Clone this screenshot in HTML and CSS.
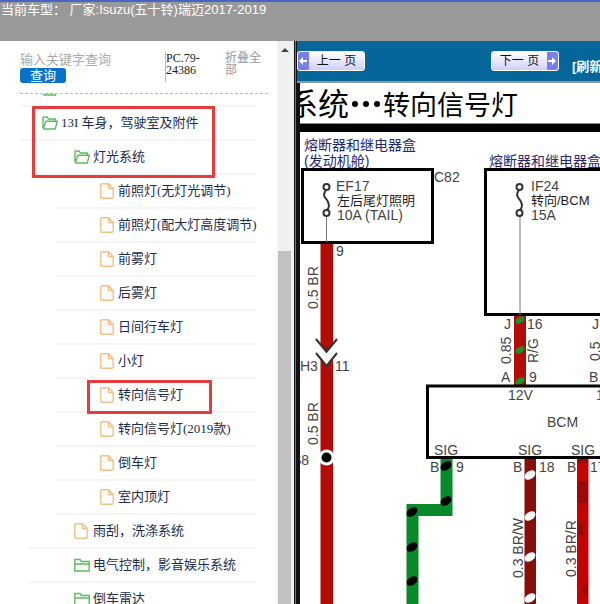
FILE: index.html
```html
<!DOCTYPE html>
<html lang="zh-CN">
<head>
<meta charset="utf-8">
<title>Isuzu(五十铃)瑞迈2017-2019</title>
<link rel="stylesheet" href="styles.css">
</head>
<body>
<svg class="defs" aria-hidden="true">
  <symbol id="open" viewBox="0 0 16 14"><path d="M1 12.5V1.7Q1 1 1.7 1H5l1.5 2h6.300q.7 0 .7.700V5M1.300 12.800 4 5.200h11.300L13.300 13H1.300"/></symbol>
  <symbol id="closed" viewBox="0 0 16 14"><path d="M.8 13V1.500H6L7.500 3.500H15.200V13zM.8 6H15.200"/></symbol>
  <symbol id="file" viewBox="0 0 14 16"><path d="M2 .8H8.500L13.200 5.500V14q0 1.200-1.200 1.200H2Q.8 15.200.8 14V2Q.8.800 2 .8M8.500 1V5.500H13"/></symbol>
</svg>
<header class="top">当前车型： 厂家:Isuzu(五十铃)瑞迈2017-2019</header>
<main class="main">
  <aside class="side">
    <div class="side-body">
      <form class="search">
        <div class="search-field">
          <input type="text" placeholder="输入关键字查询" aria-label="输入关键字查询">
          <button type="button">查询</button>
        </div>
        <span class="code">PC.79-24386</span>
        <a class="collapse" href="#">折叠全部</a>
      </form>
      <nav class="tree">
        <ul class="l1">
          <li><a class="row" href="#" aria-label="目录"><svg class="folder"><use href="#open"/></svg></a></li>
          <li>
            <div class="marked">
              <a class="row" href="#"><svg class="folder"><use href="#open"/></svg>13I 车身，驾驶室及附件</a>
              <a class="row sub" href="#"><svg class="folder"><use href="#open"/></svg>灯光系统</a>
            </div>
            <ul class="l2">
              <li>
                <ul class="l3">
                  <li><a class="row" href="#"><svg class="file"><use href="#file"/></svg>前照灯(无灯光调节)</a></li>
                  <li><a class="row" href="#"><svg class="file"><use href="#file"/></svg>前照灯(配大灯高度调节)</a></li>
                  <li><a class="row" href="#"><svg class="file"><use href="#file"/></svg>前雾灯</a></li>
                  <li><a class="row" href="#"><svg class="file"><use href="#file"/></svg>后雾灯</a></li>
                  <li><a class="row" href="#"><svg class="file"><use href="#file"/></svg>日间行车灯</a></li>
                  <li><a class="row" href="#"><svg class="file"><use href="#file"/></svg>小灯</a></li>
                  <li class="marked"><a class="row" href="#"><svg class="file"><use href="#file"/></svg>转向信号灯</a></li>
                  <li><a class="row" href="#"><svg class="file"><use href="#file"/></svg>转向信号灯(2019款)</a></li>
                  <li><a class="row" href="#"><svg class="file"><use href="#file"/></svg>倒车灯</a></li>
                  <li><a class="row" href="#"><svg class="file"><use href="#file"/></svg>室内顶灯</a></li>
                </ul>
              </li>
              <li><a class="row leaf" href="#"><svg class="file"><use href="#file"/></svg>雨刮，洗涤系统</a></li>
              <li><a class="row" href="#"><svg class="folder closed"><use href="#closed"/></svg>电气控制，影音娱乐系统</a></li>
              <li><a class="row" href="#"><svg class="folder closed"><use href="#closed"/></svg>倒车雷达</a></li>
            </ul>
          </li>
        </ul>
      </nav>
    </div>
    <div class="scroll"><span class="scroll-up"></span><span class="thumb"></span></div>
  </aside>
  <div class="divider"></div>
  <section class="viewer">
    <div class="toolbar">
      <button class="page prev" type="button"><span class="arrow"><svg viewBox="0 0 10 10"><path d="M1 5 5 1V4H9V6H5V9z"/></svg></span><span class="label">上一 页</span></button>
      <button class="page next" type="button"><span class="label">下一 页</span><span class="arrow"><svg viewBox="0 0 10 10"><path d="M9 5 5 1V4H1V6H5V9z"/></svg></span></button>
      <a class="refresh" href="#">[刷新]</a>
    </div>
    <div class="sheet">
      <svg class="diagram" viewBox="300 83 300 521" preserveAspectRatio="xMinYMin slice">
        <!-- title -->
        <g class="title">
          <text x="287" y="115" class="wide">系统</text>
          <circle cx="355" cy="104" r="3"/><circle cx="366" cy="104" r="3"/><circle cx="377" cy="104" r="3"/>
          <text x="383" y="115">转向信号灯</text>
        </g>
        <rect x="300" y="124" width="400" height="8"/>
        <rect x="300" y="123" width="400" height="1" fill="#888"/>

        <!-- wires -->
        <g class="red">
          <path d="M320.500 244H333V344L326.500 352 320.500 344z"/>
          <path d="M320.500 358 326.500 366 333 358V620H320.500z"/>
          <path d="M514 316H526V385H514z"/>
          <path class="bright" d="M577 459H588.500V620H577z"/>
        </g>
        <g class="shade"><path d="M577 459H588V463H577zM577 481H588V503H577zM578 523H583V535H578zM582 590 588 582V594H582z"/></g>
        <path fill="#841008" d="M524.500 459H536V620H524.500z"/>
        <path fill="#088a2a" d="M440.500 459H452.500V516H418.500V620H406.500V504H440.500z"/>
        <g class="green-dots">
          <ellipse rx="5" ry="3" transform="translate(520 320) rotate(-35)"/>
          <ellipse rx="5" ry="3" transform="translate(520 350) rotate(-35)"/>
          <ellipse rx="5" ry="3" transform="translate(520 381) rotate(-35)"/>
        </g>
        <g>
          <ellipse rx="6" ry="4" transform="translate(446 466) rotate(-35)"/>
          <ellipse rx="6" ry="4" transform="translate(446 501) rotate(-35)"/>
          <ellipse rx="6" ry="4" transform="translate(412 512) rotate(-35)"/>
          <ellipse rx="6" ry="4" transform="translate(412 547) rotate(-35)"/>
          <ellipse rx="6" ry="4" transform="translate(412 581) rotate(-35)"/>
        </g>
        <g fill="#fff">
          <ellipse rx="6" ry="4" transform="translate(530 475) rotate(-35)"/>
          <ellipse rx="6" ry="4" transform="translate(530 516) rotate(-35)"/>
          <ellipse rx="6" ry="4" transform="translate(530 557) rotate(-35)"/>
          <ellipse rx="6" ry="4" transform="translate(530 598) rotate(-35)"/>
        </g>
        <circle cx="326.500" cy="457.500" r="8" fill="#fff"/>
        <circle cx="326.500" cy="457.500" r="5"/>
        <g class="thin dark">
          <path d="M316 339 326.500 352 337 339M316 353 326.500 366 337 353"/>
        </g>

        <!-- boxes and fuses -->
        <g class="box">
          <rect x="302.500" y="169.500" width="130" height="73"/>
          <rect x="485.500" y="169.500" width="180" height="145"/>
          <rect x="427.500" y="386" width="240" height="71.500"/>
        </g>
        <g class="thin">
          <path d="M326.500 216V242M520 216V315"/>
          <g class="dark">
            <circle cx="326.500" cy="187" r="3"/><circle cx="326.500" cy="213" r="3"/>
            <path d="M326 190C321 197 327 198 328 202 330 206 329 208 327 210"/>
            <circle cx="519.500" cy="187" r="3"/><circle cx="519.500" cy="213" r="3"/>
            <path d="M519 190C514 197 520 198 521 202 523 206 522 208 520 210"/>
          </g>
        </g>

        <!-- labels -->
        <g class="blue">
          <text x="304" y="150">熔断器和继电器盒</text>
          <text x="304" y="166">(发动机舱)</text>
          <text x="489" y="166">熔断器和继电器盒</text>
        </g>
        <g class="zh">
          <text x="337" y="205">左后尾灯照明</text>
          <text x="531" y="205">转向/BCM</text>
        </g>
        <g class="lbl">
          <text x="336" y="191">EF17</text><text x="337" y="220">10A (TAIL)</text>
          <text x="434" y="182">C82</text><text x="336" y="256">9</text>
          <text x="531" y="191">IF24</text><text x="531" y="220">15A</text>
          <text x="300" y="371">H3</text><text x="335" y="371">11</text><text x="292" y="465">S8</text>
          <text x="504" y="329">J</text><text x="527" y="329">16</text><text x="592" y="329">J</text>
          <text x="501" y="382">A</text><text x="529" y="382">9</text><text x="589" y="382">B</text>
          <text x="508" y="400">12V</text><text x="596" y="400">12V</text>
          <text x="547" y="427">BCM</text>
          <text x="434" y="455">SIG</text><text x="518" y="455">SIG</text><text x="571" y="455">SIG</text>
          <text x="430" y="472">B</text><text x="456" y="472">9</text>
          <text x="513" y="472">B</text><text x="539" y="472">18</text>
          <text x="567" y="472">B</text><text x="590" y="472">17</text>
          <text transform="translate(318 309) rotate(-90)">0.5 BR</text>
          <text transform="translate(318 445) rotate(-90)">0.5 BR</text>
          <text transform="translate(511 364) rotate(-90)">0.85</text>
          <text transform="translate(538 363) rotate(-90)">R/G</text>
          <text transform="translate(600 361) rotate(-90)">0.5</text>
          <text transform="translate(523 578) rotate(-90)">0.3 BR/W</text>
          <text transform="translate(576 577) rotate(-90)">0.3 BR/R</text>
        </g>
      </svg>
    </div>
  </section>
</main>
</body>
</html>
```
FILE: styles.css
```css
* { box-sizing: border-box; }
body {
  margin: 0;
  height: 100vh;
  display: flex;
  flex-direction: column;
  overflow: hidden;
  background: #fff;
  font: 13px/16px "Liberation Sans", "Noto Sans CJK SC", sans-serif;
}
ul { list-style: none; margin: 0; padding: 0; }
a { color: inherit; text-decoration: none; }
.defs { display: none; }

.top {
  flex: none;
  height: 41px;
  border-top: 2px solid #4864c4;
  background: #999;
  color: #fff;
  padding-left: 1px;
}
.main { flex: 1; min-height: 0; display: flex; }

/* sidebar */
.side { flex: none; width: 49%; display: flex; }
.side-body { flex: 1; min-width: 0; display: flex; flex-direction: column; padding: 0 9px 0 20px; }
.search {
  flex: none;
  height: 53px;
  padding-top: 11px;
  display: flex;
  align-items: flex-start;
  border-bottom: 1px dashed #bbb;
  font: 12px/12px "Liberation Serif", "Noto Sans CJK SC", serif;
}
.search-field { width: 145px; display: flex; flex-direction: column; align-items: flex-start; }
.search input {
  width: 100%;
  height: 16px;
  padding: 0;
  border: 0;
  outline: 0;
  background: none;
  font: 13px/16px "Liberation Sans", "Noto Sans CJK SC", sans-serif;
}
.search input::placeholder { color: #a9a9a9; }
.search button {
  width: 46px;
  height: 15px;
  padding: 0;
  border: 0;
  border-radius: 3px;
  background: #0872c8;
  color: #fff;
  font: 13px/15px "Liberation Sans", "Noto Sans CJK SC", sans-serif;
}
.code { width: 60px; height: 30px; padding-right: 20px; border-left: 1px solid #bbb; color: #222; }
.collapse { flex: 1; color: #999; }

.tree {
  flex: 1;
  min-height: 0;
  overflow: hidden;
  padding-right: 12px;
  color: #1c2c4c;
  font: 13px/16px "Liberation Serif", "Noto Sans CJK SC", serif;
}
.l1 { margin-top: -21px; }
.l2 { padding-left: 8px; }
.l3 { padding-left: 28px; }
.row {
  height: 34px;
  display: flex;
  align-items: center;
  gap: 3px;
  padding-left: 22px;
  border-bottom: 2px solid #f5f5f5;
  white-space: nowrap;
}
.row.sub { margin-left: 8px; }
.row.sub, .l2 .row { padding-left: 46px; }
.l2 .leaf { gap: 5px; }
.l2 .l3 .row { padding-left: 44px; gap: 4px; }
.row svg { flex: none; fill: none; stroke-width: 1.4; }
.folder { width: 16px; height: 14px; stroke: #5cbc5c; }
.file { width: 14px; height: 16px; stroke: #f4bf84; }
.marked { position: relative; }
.marked::after {
  content: "";
  position: absolute;
  inset: -1px 41px -3px 12px;
  border: 3px solid #e63c3c;
  pointer-events: none;
}
.l3 .marked::after { inset: 1px 44px -1px 31px; }

.scroll { flex: none; width: 17px; background: #f0f0f0; display: flex; flex-direction: column; align-items: center; padding: 7px 3px 0 1px; }
.scroll-up { border: 4px solid transparent; border-top: 0; border-bottom-color: #444; }
.thumb { flex: 1; width: 13px; margin-top: 199px; background: #c1c1c1; }
.divider { flex: none; width: 3px; background: #777; border: solid #111; border-width: 0 1px; }

/* viewer */
.viewer { flex: 1; min-width: 0; display: flex; flex-direction: column; }
.toolbar {
  flex: none;
  height: 42px;
  display: flex;
  align-items: center;
  background: #046699;
  border-bottom: 2px solid #8a9aa0;
  overflow: hidden;
}
.page {
  flex: none;
  width: 68px;
  height: 20px;
  display: flex;
  align-items: stretch;
  padding: 0;
  border: 1px solid #7078d8;
  border-radius: 3px;
  outline: 1px solid #fff;
  outline-offset: -1px;
  background: linear-gradient(#fff, #d0d0fa);
  color: #111;
  font: 12px/18px "Liberation Sans", "Noto Sans CJK SC", sans-serif;
  overflow: hidden;
}
.page .label { flex: 1; text-align: center; }
.arrow { width: 11px; display: flex; align-items: center; background: #7880e8; }
.arrow svg { width: 10px; height: 10px; fill: #fff; }
.next { margin-left: 126px; }
.refresh { margin: 12px 0 0 13px; color: #fff; font-weight: bold; white-space: nowrap; }
.sheet { flex: 1; min-height: 0; border-left: 3px solid #111; overflow: hidden; }

.diagram { display: block; width: 100%; height: 100%; font: 14px "Liberation Sans", "Noto Sans CJK SC", sans-serif; }
.title { font-size: 27px; }
.title .wide { font-size: 31px; }
.red { fill: #b30b05; }
.bright { fill: #c40404; }
.shade { fill: #8c0808; opacity: 0.7; }
.green-dots { fill: #16922e; }
.box { fill: none; stroke: #000; stroke-width: 3; }
.thin { fill: none; stroke: #777; stroke-width: 1; }
.dark { stroke: #333; stroke-width: 2; }
.blue { fill: #28286e; }
.zh { fill: #222; font-size: 13px; }
.lbl { fill: #444; }
```
